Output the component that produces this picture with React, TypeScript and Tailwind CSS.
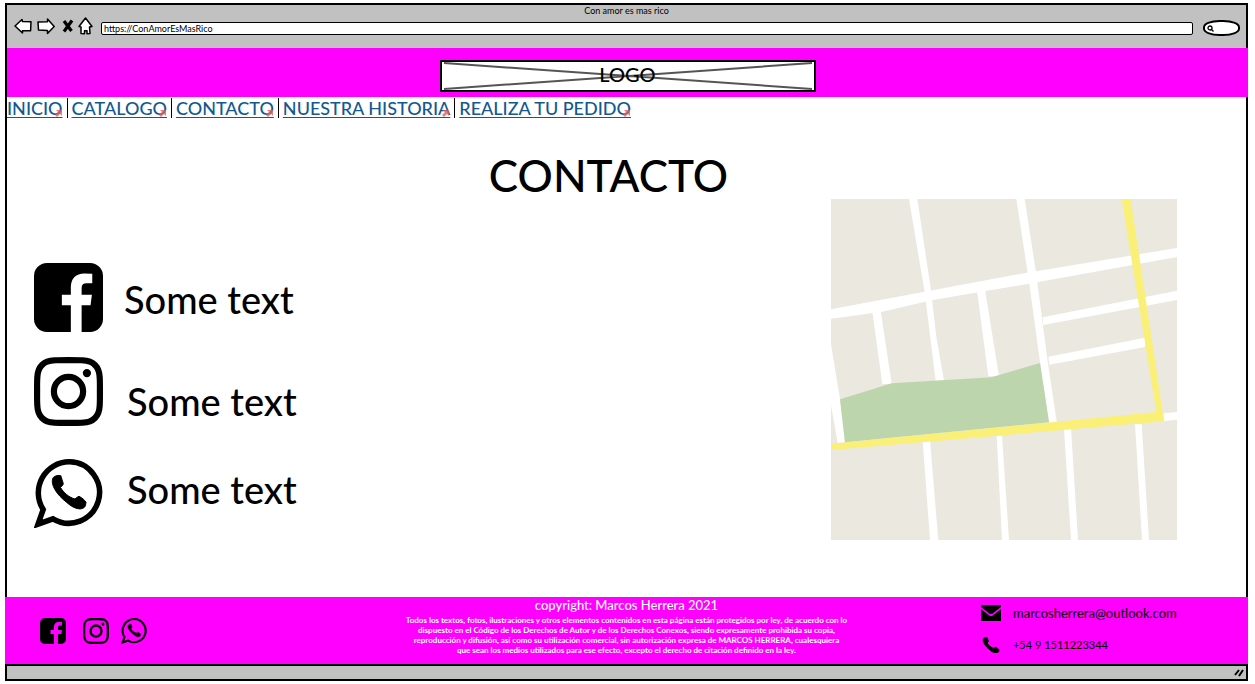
import React from "react";

const FACEBOOK =
  "M1376 128q119 0 203.5 84.5t84.5 203.5v960q0 119-84.5 203.5t-203.5 84.5h-188v-595h199l30-232h-229v-148q0-56 23.5-84t91.5-28l122-1v-207q-63-9-178-9-136 0-217.5 80t-81.5 226v171h-200v232h200v595h-532q-119 0-203.5-84.5t-84.5-203.5v-960q0-119 84.5-203.5t203.5-84.5h960z";
const INSTAGRAM =
  "M1152 896q0-106-75-181t-181-75-181 75-75 181 75 181 181 75 181-75 75-181zm138 0q0 164-115 279t-279 115-279-115-115-279 115-279 279-115 279 115 115 279zm108-410q0 38-27 65t-65 27-65-27-27-65 27-65 65-27 65 27 27 65zm-502-220q-7 0-76.5-.5t-105.5 0-96.5 3-103 10-71.5 18.5q-50 20-88 58t-58 88q-11 29-18.5 71.5t-10 103-3 96.5 0 105.5.5 76.5-.5 76.5 0 105.5 3 96.5 10 103 18.5 71.5q20 50 58 88t88 58q29 11 71.5 18.5t103 10 96.5 3 105.5 0 76.5-.5 76.5.5 105.5 0 96.5-3 103-10 71.5-18.5q50-20 88-58t58-88q11-29 18.5-71.5t10-103 3-96.5 0-105.5-.5-76.5.5-76.5 0-105.5-3-96.5-10-103-18.5-71.5q-20-50-58-88t-88-58q-29-11-71.5-18.5t-103-10-96.5-3-105.5 0-76.5.5zm768 630q0 229-5 317-10 208-124 322t-322 124q-88 5-317 5t-317-5q-208-10-322-124t-124-322q-5-88-5-317t5-317q10-208 124-322t322-124q88-5 317-5t317 5q208 10 322 124t124 322q5 88 5 317z";
const HANDSET =
  "M19.300 18.500c2-2 5.500-2.500 7.500-1.800l2.500 8c-.3 1.300-1.300 2.500-2.800 3.800 3 5 8.500 10 14.500 11.500 1.200-1 2.500-2.200 4-2.700 3 1.500 5.500 3.500 7 6-.2 2-.5 3.500-1.300 4.700-1.700 1.500-3.200 2-5.500 1.900-4.500-.5-8.500-3-12.500-6.500-5-4-9-8-11.700-12.700-2.500-4.300-3.700-8.700-1.700-12.200Z";

type IconProps = { className: string };

function FacebookIcon({ className }: IconProps) {
  return (
    <svg aria-hidden="true" viewBox="128 128 1536 1536" className={className} fill="currentColor">
      <path d={FACEBOOK} />
    </svg>
  );
}

function InstagramIcon({ className }: IconProps) {
  return (
    <svg aria-hidden="true" viewBox="128 128 1536 1536" className={className} fill="currentColor">
      <path d={INSTAGRAM} />
    </svg>
  );
}

function WhatsappIcon({ className }: IconProps) {
  return (
    <svg aria-hidden="true" viewBox="0 0 69 69" className={className}>
      <path
        d="M35.500 2.800a30.700 30.700 0 1 1-16.500 57L4 65.200 9.200 50.500A31 31 0 0 1 35.500 2.800Z"
        fill="none"
        stroke="currentColor"
        strokeWidth="5.5"
      />
      <path d={HANDSET} fill="currentColor" stroke="currentColor" strokeWidth="1" strokeLinejoin="round" />
    </svg>
  );
}

function NavLink({ children }: { children: string }) {
  return (
    <a href="#" className="relative block text-[18px] leading-[22px] font-medium text-[#13598f] underline underline-offset-2">
      {children}
      <svg aria-hidden="true" viewBox="0 0 8 8" className="absolute right-0 bottom-0.5 size-2">
        <path d="M1 1h6v6L5 5 2 8 0 6l3-3Z" fill="#e0605e" fillOpacity="0.8" />
      </svg>
    </a>
  );
}

function BrowserBar() {
  return (
    <div className="h-[43px] bg-[#c1c1c1]">
      <p className="text-center text-[9px] leading-[11px]">Con amor es mas rico</p>
      <div className="flex items-center pr-1.5 pl-[7px]">
        <button aria-label="Atrás" className="mr-[5px] block">
          <svg viewBox="0 0 18 18" className="size-[18px]" fill="white" stroke="black" strokeWidth="1.5" strokeLinejoin="round">
            <path d="M1 9 8 2.500l.5 2 8.500.3-.4 9-8.100-.1V16Z" />
          </svg>
        </button>
        <button aria-label="Adelante" className="mr-[7px] block">
          <svg viewBox="0 0 18 18" className="size-[18px]" fill="white" stroke="black" strokeWidth="1.5" strokeLinejoin="round">
            <path d="M17.200 9.500 10.500 2v2.800L1 5l.5 8 9 .5v3Z" />
          </svg>
        </button>
        <button aria-label="Detener" className="mr-1 block">
          <svg viewBox="0 0 12 14" className="h-3.5 w-3" fill="none" stroke="black" strokeWidth="3.2">
            <path d="m2 2 7.500 10M10 1.500 2 12.500" />
          </svg>
        </button>
        <button aria-label="Inicio" className="mr-2 block">
          <svg viewBox="0 0 15 18" className="h-[18px] w-[15px]" fill="white" stroke="black" strokeWidth="1.5" strokeLinejoin="round">
            <path d="M7.500 1 14 9.500l-2.500.5.5 6.500-3 .2v-3H6.500v3L3 16.500V10L1 9.500Z" />
          </svg>
        </button>
        <input
          aria-label="Dirección"
          defaultValue="https://ConAmorEsMasRico"
          className="mt-1 h-[13px] min-w-0 flex-1 rounded-xs border border-black bg-white px-0.5 text-[9px] leading-none"
        />
        <label className="mt-1 ml-2.5 flex h-4 w-[37px] items-center rounded-[45%] border-2 border-black bg-white px-0.5">
          <svg aria-hidden="true" viewBox="0 0 7 7" className="size-[7px] shrink-0" fill="none" stroke="black" strokeWidth="1.3">
            <circle cx="3" cy="3" r="2" />
            <path d="m4.500 4.500 2 2" />
          </svg>
          <input aria-label="Buscar" className="w-full min-w-0 bg-transparent text-[9px] outline-none" />
        </label>
      </div>
    </div>
  );
}

function StreetMap() {
  return (
    <svg role="img" aria-label="Mapa" viewBox="0 0 1038 1023" className="h-[341px] w-[346px]">
      <path fill="#ebe8e0" d="M0 0h1038v1023H0z" />
      <g fill="white">
        <path d="M234 0h25l41 274 16 139 23 132h-25L285 312l-5-38ZM556 0h25l34 220 34 260 29 194h-23l-27-178-34-248Z" />
        <path d="M0 331 280 278l308-57 450-74v27L618 250 306 303 150 339 0 359Z" />
        <path d="m124 338 25-3 33 220h-28ZM438 275l24-3 42 260h-32ZM0 436l27 164 15 131H20L0 619ZM635 355l403-80v28L637 378ZM652 473l290-57v28L655 497Z" />
        <path d="m275 725 22-2 25 300h-25ZM497 710h16l21 313h-21ZM699 690l21-3 21 336h-21ZM912 675h20l22 348h-21ZM998 643l40-4v23l-40 4Z" />
      </g>
      <path d="m27 601 155-48 299-18 146-43 27 178L42 730Z" fill="#bdd5ad" />
      <path d="M0 734 976 639 872 0h27l100 667L0 753Z" fill="#faef77" />
    </svg>
  );
}

export default function App() {
  return (
    <div className="flex min-h-screen flex-col bg-white pt-[3px] pr-[7px] pb-[3px] pl-[5px] font-['Lato',sans-serif] text-black">
      <div className="flex flex-1 flex-col border-2 border-black">
        <BrowserBar />
        <header className="-mr-0.5 flex h-[49px] items-end justify-center bg-[#ff00ff] pb-[5px]">
          <div className="relative flex h-8 w-[376px] justify-center border-2 border-black bg-white">
            <svg aria-hidden="true" viewBox="0 0 372 28" className="absolute inset-0 size-full" stroke="#555" strokeWidth="2">
              <path d="m2 1 368 26M2 27 370 1" />
            </svg>
            <span className="relative text-[20px] leading-6 font-medium">LOGO</span>
          </div>
        </header>
        <nav className="flex h-[22px] items-center">
          {["INICIO", "CATALOGO", "CONTACTO", "NUESTRA HISTORIA", "REALIZA TU PEDIDO"].map((item, i) => (
            <div key={item} className="flex items-center">
              {i > 0 && <span className="mx-1 h-5 w-px bg-black" />}
              <NavLink>{item}</NavLink>
            </div>
          ))}
        </nav>
        <main className="flex flex-1 flex-col">
          <h1 className="mt-8 mr-9 text-center text-[44px] leading-[48px] font-medium">CONTACTO</h1>
          <div className="flex justify-between pr-[69px] pl-[27px]">
            <ul className="mt-16 text-[38px] leading-10 font-medium">
              <li className="flex h-[94px] items-start gap-[21px]">
                <FacebookIcon className="size-[69px]" />
                <span className="mt-4">Some text</span>
              </li>
              <li className="flex h-[102px] items-start gap-6">
                <InstagramIcon className="size-[69px]" />
                <span className="mt-6">Some text</span>
              </li>
              <li className="flex items-start gap-6">
                <WhatsappIcon className="size-[69px]" />
                <span className="mt-2.5">Some text</span>
              </li>
            </ul>
            <StreetMap />
          </div>
        </main>
        <footer className="-mx-0.5 flex h-[67px] justify-between bg-[#ff00ff]">
          <div className="flex w-[267px] items-center pl-[35px]">
            <FacebookIcon className="mr-[17px] size-[26px]" />
            <InstagramIcon className="mr-3 size-[26px]" />
            <WhatsappIcon className="size-[26px]" />
          </div>
          <div className="text-center text-white">
            <p className="text-[13px] leading-4 font-medium">copyright: Marcos Herrera 2021</p>
            <p className="mt-0.5 text-[8px] leading-[10px] font-bold">
              Todos los textos, fotos, ilustraciones y otros elementos contenidos en esta página están protegidos por ley, de acuerdo con lo
              <br />
              dispuesto en el Código de los Derechos de Autor y de los Derechos Conexos, siendo expresamente prohibida su copia,
              <br />
              reproducción y difusión, así como su utilización comercial, sin autorización expresa de MARCOS HERRERA, cualesquiera
              <br />
              que sean los medios utilizados para ese efecto, excepto el derecho de citación definido en la ley.
            </p>
          </div>
          <address className="flex w-[267px] flex-col gap-3 pt-1.5 not-italic">
            <div className="flex items-center gap-3">
              <svg aria-hidden="true" viewBox="0 0 20 16" className="h-4 w-5">
                <path d="M0 0h20v2l-9 7H9L0 2ZM0 4l9 7h2l9-7v12H0Z" />
              </svg>
              <span className="text-[13px] leading-5">marcosherrera@outlook.com</span>
            </div>
            <div className="flex items-center gap-3">
              <svg aria-hidden="true" viewBox="17 16 36 34" className="h-4 w-5">
                <path d={HANDSET} stroke="currentColor" strokeWidth="2" />
              </svg>
              <span className="text-[11px] leading-5">+54 9 1511223344</span>
            </div>
          </address>
        </footer>
        <div className="flex h-[15px] items-center justify-end border-t-2 border-black bg-[#c1c1c1] pr-0.5">
          <svg aria-hidden="true" viewBox="0 0 10 9" className="h-[9px] w-2.5" stroke="black" strokeWidth="2">
            <path d="m1 7 4-5M5 8l4-6" />
          </svg>
        </div>
      </div>
    </div>
  );
}
